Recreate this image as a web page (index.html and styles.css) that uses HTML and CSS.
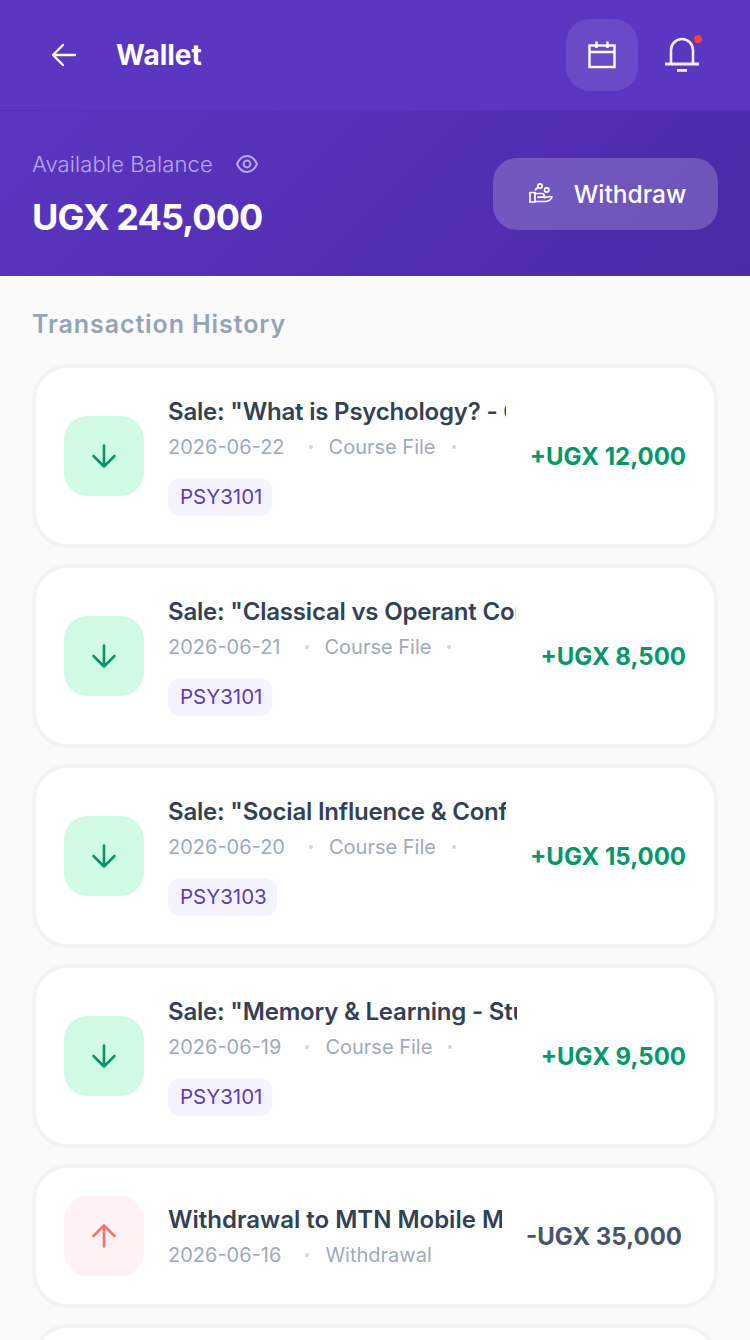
FILE: index.html
```html
<!DOCTYPE html>
<html lang="en">
<head>
    <meta charset="UTF-8">
    <meta name="viewport" content="width=device-width, initial-scale=1.0">
    <title>Wallet</title>
    <link rel="stylesheet" href="styles.css">
</head>
<body>
    <header class="topbar">
        <button class="back-btn" type="button" aria-label="Back">
            <svg width="28" height="28" viewBox="0 0 28 28" fill="none" stroke="currentColor" stroke-width="2.4" stroke-linecap="round" stroke-linejoin="round"><path d="M25 14H3M13 4 3 14l10 10"/></svg>
        </button>
        <h1 class="page-title">Wallet</h1>
        <div class="topbar-actions">
            <button class="icon-btn icon-btn-active" type="button" aria-label="Calendar">
                <svg width="30" height="30" viewBox="0 0 30 30" fill="none" stroke="currentColor" stroke-width="2.4"><rect x="2.5" y="5.500" width="25" height="21.500"/><path d="M2.5 12h25M9.500 1.500V8M20.500 1.500V8"/></svg>
            </button>
            <button class="icon-btn icon-btn-bell" type="button" aria-label="Notifications">
                <svg width="36" height="38" viewBox="0 0 36 38" fill="none" stroke="currentColor" stroke-width="2.6"><path d="M7 27V14a11 11 0 0 1 22 0v13"/><path d="M1 28h34" stroke-width="3.2"/><path d="M13 34.400h10" stroke-width="2.800"/></svg>
                <span class="notif-dot"></span>
            </button>
        </div>
    </header>

    <section class="balance">
        <div class="balance-info">
            <div class="balance-label">
                <span>Available Balance</span>
                <svg width="22" height="18" viewBox="0 0 22 18" fill="none" stroke="currentColor" stroke-width="2"><path d="M1 9C3.500 3.500 6.800 1 11 1s7.500 2.500 10 8c-2.500 5.500-5.800 8-10 8S3.500 14.500 1 9Z"/><circle cx="11" cy="9" r="3.400"/></svg>
            </div>
            <div class="balance-amount">UGX 245,000</div>
        </div>
        <button class="withdraw-btn" type="button">
            <svg width="24" height="21" viewBox="0 0 24 21" fill="none" stroke="currentColor" stroke-width="1.700" stroke-linecap="round" stroke-linejoin="round"><rect x="1" y="9.500" width="5" height="9.500"/><path d="M6 10.500h7c1.500 0 2.200.8 2.200 1.800s-.7 1.800-2.200 1.800H9M6 18.500h10c3 0 6-1.700 7-4.500-2-1-4-.6-7.800.7"/><circle cx="11" cy="3" r="2.200"/><circle cx="17.700" cy="7" r="2.200"/><path d="M6.500 7c.3-1 1-1.700 2-1.900"/></svg>
            <span>Withdraw</span>
        </button>
    </section>

    <main class="content">
        <h2 class="section-title">Transaction History</h2>
        <div class="tx-list">
            <div class="tx-card">
                <div class="tx-icon tx-icon-in">
                    <svg width="28" height="28" viewBox="0 0 28 28" fill="none" stroke="currentColor" stroke-width="2.600" stroke-linecap="round" stroke-linejoin="round"><path d="M14 3.500v21M3.500 14 14 24.500 24.500 14"/></svg>
                </div>
                <div class="tx-info">
                    <div class="tx-title">Sale: "What is Psychology? - Course Notes"</div>
                    <div class="tx-meta"><span>2026-06-22</span><span class="dot"></span><span>Course File</span><span class="dot dot-end"></span></div>
                    <span class="tx-tag">PSY3101</span>
                </div>
                <div class="tx-amount tx-amount-in">+UGX 12,000</div>
            </div>
            <div class="tx-card">
                <div class="tx-icon tx-icon-in">
                    <svg width="28" height="28" viewBox="0 0 28 28" fill="none" stroke="currentColor" stroke-width="2.600" stroke-linecap="round" stroke-linejoin="round"><path d="M14 3.500v21M3.500 14 14 24.500 24.500 14"/></svg>
                </div>
                <div class="tx-info">
                    <div class="tx-title">Sale: "Classical vs Operant Conditioning"</div>
                    <div class="tx-meta"><span>2026-06-21</span><span class="dot"></span><span>Course File</span><span class="dot dot-end"></span></div>
                    <span class="tx-tag">PSY3101</span>
                </div>
                <div class="tx-amount tx-amount-in">+UGX 8,500</div>
            </div>
            <div class="tx-card">
                <div class="tx-icon tx-icon-in">
                    <svg width="28" height="28" viewBox="0 0 28 28" fill="none" stroke="currentColor" stroke-width="2.600" stroke-linecap="round" stroke-linejoin="round"><path d="M14 3.500v21M3.500 14 14 24.500 24.500 14"/></svg>
                </div>
                <div class="tx-info">
                    <div class="tx-title">Sale: "Social Influence &amp; Conformity"</div>
                    <div class="tx-meta"><span>2026-06-20</span><span class="dot"></span><span>Course File</span><span class="dot dot-end"></span></div>
                    <span class="tx-tag">PSY3103</span>
                </div>
                <div class="tx-amount tx-amount-in">+UGX 15,000</div>
            </div>
            <div class="tx-card">
                <div class="tx-icon tx-icon-in">
                    <svg width="28" height="28" viewBox="0 0 28 28" fill="none" stroke="currentColor" stroke-width="2.600" stroke-linecap="round" stroke-linejoin="round"><path d="M14 3.500v21M3.500 14 14 24.500 24.500 14"/></svg>
                </div>
                <div class="tx-info">
                    <div class="tx-title">Sale: "Memory &amp; Learning - Study Guide"</div>
                    <div class="tx-meta"><span>2026-06-19</span><span class="dot"></span><span>Course File</span><span class="dot dot-end"></span></div>
                    <span class="tx-tag">PSY3101</span>
                </div>
                <div class="tx-amount tx-amount-in">+UGX 9,500</div>
            </div>
            <div class="tx-card">
                <div class="tx-icon tx-icon-out">
                    <svg width="28" height="28" viewBox="0 0 28 28" fill="none" stroke="currentColor" stroke-width="2.600" stroke-linecap="round" stroke-linejoin="round"><path d="M14 24.500v-21M3.500 14 14 3.500 24.500 14"/></svg>
                </div>
                <div class="tx-info">
                    <div class="tx-title tx-title-wide">Withdrawal to MTN Mobile Money</div>
                    <div class="tx-meta"><span>2026-06-16</span><span class="dot"></span><span>Withdrawal</span></div>
                </div>
                <div class="tx-amount tx-amount-out">-UGX 35,000</div>
            </div>
            <div class="tx-card tx-card-empty"></div>
        </div>
    </main>
</body>
</html>
```

FILE: styles.css
```css
* {
    box-sizing: border-box;
}
html, body {
    height: 1340px;
    overflow: hidden;
}
body {
    margin: 0;
    font-family: Inter, "Noto Sans", sans-serif;
    background-color: #fafafa;
    color: #334155;
}
button {
    border: none;
    background: none;
    color: inherit;
    font-family: inherit;
    cursor: pointer;
    padding: 0;
}

/* header */
.topbar {
    height: 111px;
    display: flex;
    align-items: center;
    padding: 0 32px 1px 50px;
    background-color: #5b36c1;
    border-bottom: 1px solid #5331b6;
    color: #fff;
}
.back-btn {
    display: flex;
    margin-right: 38px;
}
.page-title {
    margin: 0;
    font-size: 28px;
    font-weight: 700;
}
.topbar-actions {
    margin-left: auto;
    display: flex;
    align-items: center;
    gap: 8px;
}
.icon-btn {
    position: relative;
    width: 72px;
    height: 72px;
    border-radius: 24px;
    display: flex;
    align-items: center;
    justify-content: center;
}
.icon-btn-active {
    background-color: rgba(255, 255, 255, 0.1);
}
.icon-btn-bell {
    color: #f1edff;
}
.notif-dot {
    position: absolute;
    top: 16px;
    right: 16px;
    width: 8px;
    height: 8px;
    border-radius: 50%;
    background-color: #ef4444;
}

/* balance */
.balance {
    height: 165px;
    display: flex;
    align-items: center;
    justify-content: space-between;
    padding: 0 32px;
    background: linear-gradient(135deg, #5b36c1 0%, #4a2aa6 100%);
    color: #fff;
}
.balance-info {
    padding-top: 2px;
}
.balance-label {
    display: flex;
    align-items: center;
    gap: 23px;
    font-size: 22px;
    font-weight: 300;
    letter-spacing: 0.12px;
    color: #b9a8ee;
    margin-bottom: 18px;
}
.balance-amount {
    font-size: 36px;
    font-weight: 700;
    letter-spacing: -0.9px;
}
.withdraw-btn {
    width: 225px;
    height: 72px;
    display: flex;
    align-items: center;
    justify-content: center;
    gap: 21px;
    padding-left: 4px;
    border-radius: 24px;
    background-color: rgba(255, 255, 255, 0.2);
    font-size: 24.5px;
    font-weight: 500;
}

/* transactions */
.content {
    padding: 33px 32px 0;
}
.section-title {
    margin: 0 0 25px;
    font-size: 25px;
    font-weight: 600;
    letter-spacing: 0.9px;
    color: #94a3b8;
}
.tx-list {
    display: flex;
    flex-direction: column;
    gap: 16px;
}
.tx-card {
    display: flex;
    align-items: center;
    padding: 28px;
    border: 4px solid #f3f3f4;
    border-radius: 36px;
    background-color: #fff;
}
.tx-card-empty {
    height: 144px;
}
.tx-icon {
    flex: none;
    width: 80px;
    height: 80px;
    margin-right: 24px;
    border-radius: 24px;
    display: flex;
    align-items: center;
    justify-content: center;
}
.tx-icon-in {
    background-color: #d1fae5;
    color: #059669;
}
.tx-icon-out {
    background-color: #fef2f2;
    color: #f87171;
}
.tx-info {
    flex: 1;
    min-width: 0;
    overflow: hidden;
    margin-right: 24px;
}
.tx-title {
    font-size: 24px;
    font-weight: 600;
    line-height: 32px;
    letter-spacing: -0.2px;
    white-space: nowrap;
    overflow: hidden;
}
.tx-title-wide {
    letter-spacing: 0;
}
.tx-meta {
    display: flex;
    align-items: center;
    margin-top: 5px;
    font-size: 20px;
    line-height: 28px;
    color: #a0aabb;
    white-space: nowrap;
}
.dot {
    flex: none;
    width: 4px;
    height: 4px;
    margin: 0 16px 0 24px;
    border-radius: 50%;
    background-color: #d1d5db;
}
.dot-end {
    margin: 0 0 0 16px;
}
.tx-tag {
    display: inline-block;
    margin-top: 17px;
    padding: 4px 10px 4px 12px;
    border-radius: 12px;
    background-color: #f5f3ff;
    color: #5b3db8;
    font-size: 20.5px;
    line-height: 30px;
    vertical-align: top;
}
.tx-amount {
    flex: none;
    font-size: 24px;
    font-weight: 700;
}
.tx-amount-in {
    color: #059669;
}
.tx-amount-out {
    color: #475569;
    margin-right: 4px;
}
```
